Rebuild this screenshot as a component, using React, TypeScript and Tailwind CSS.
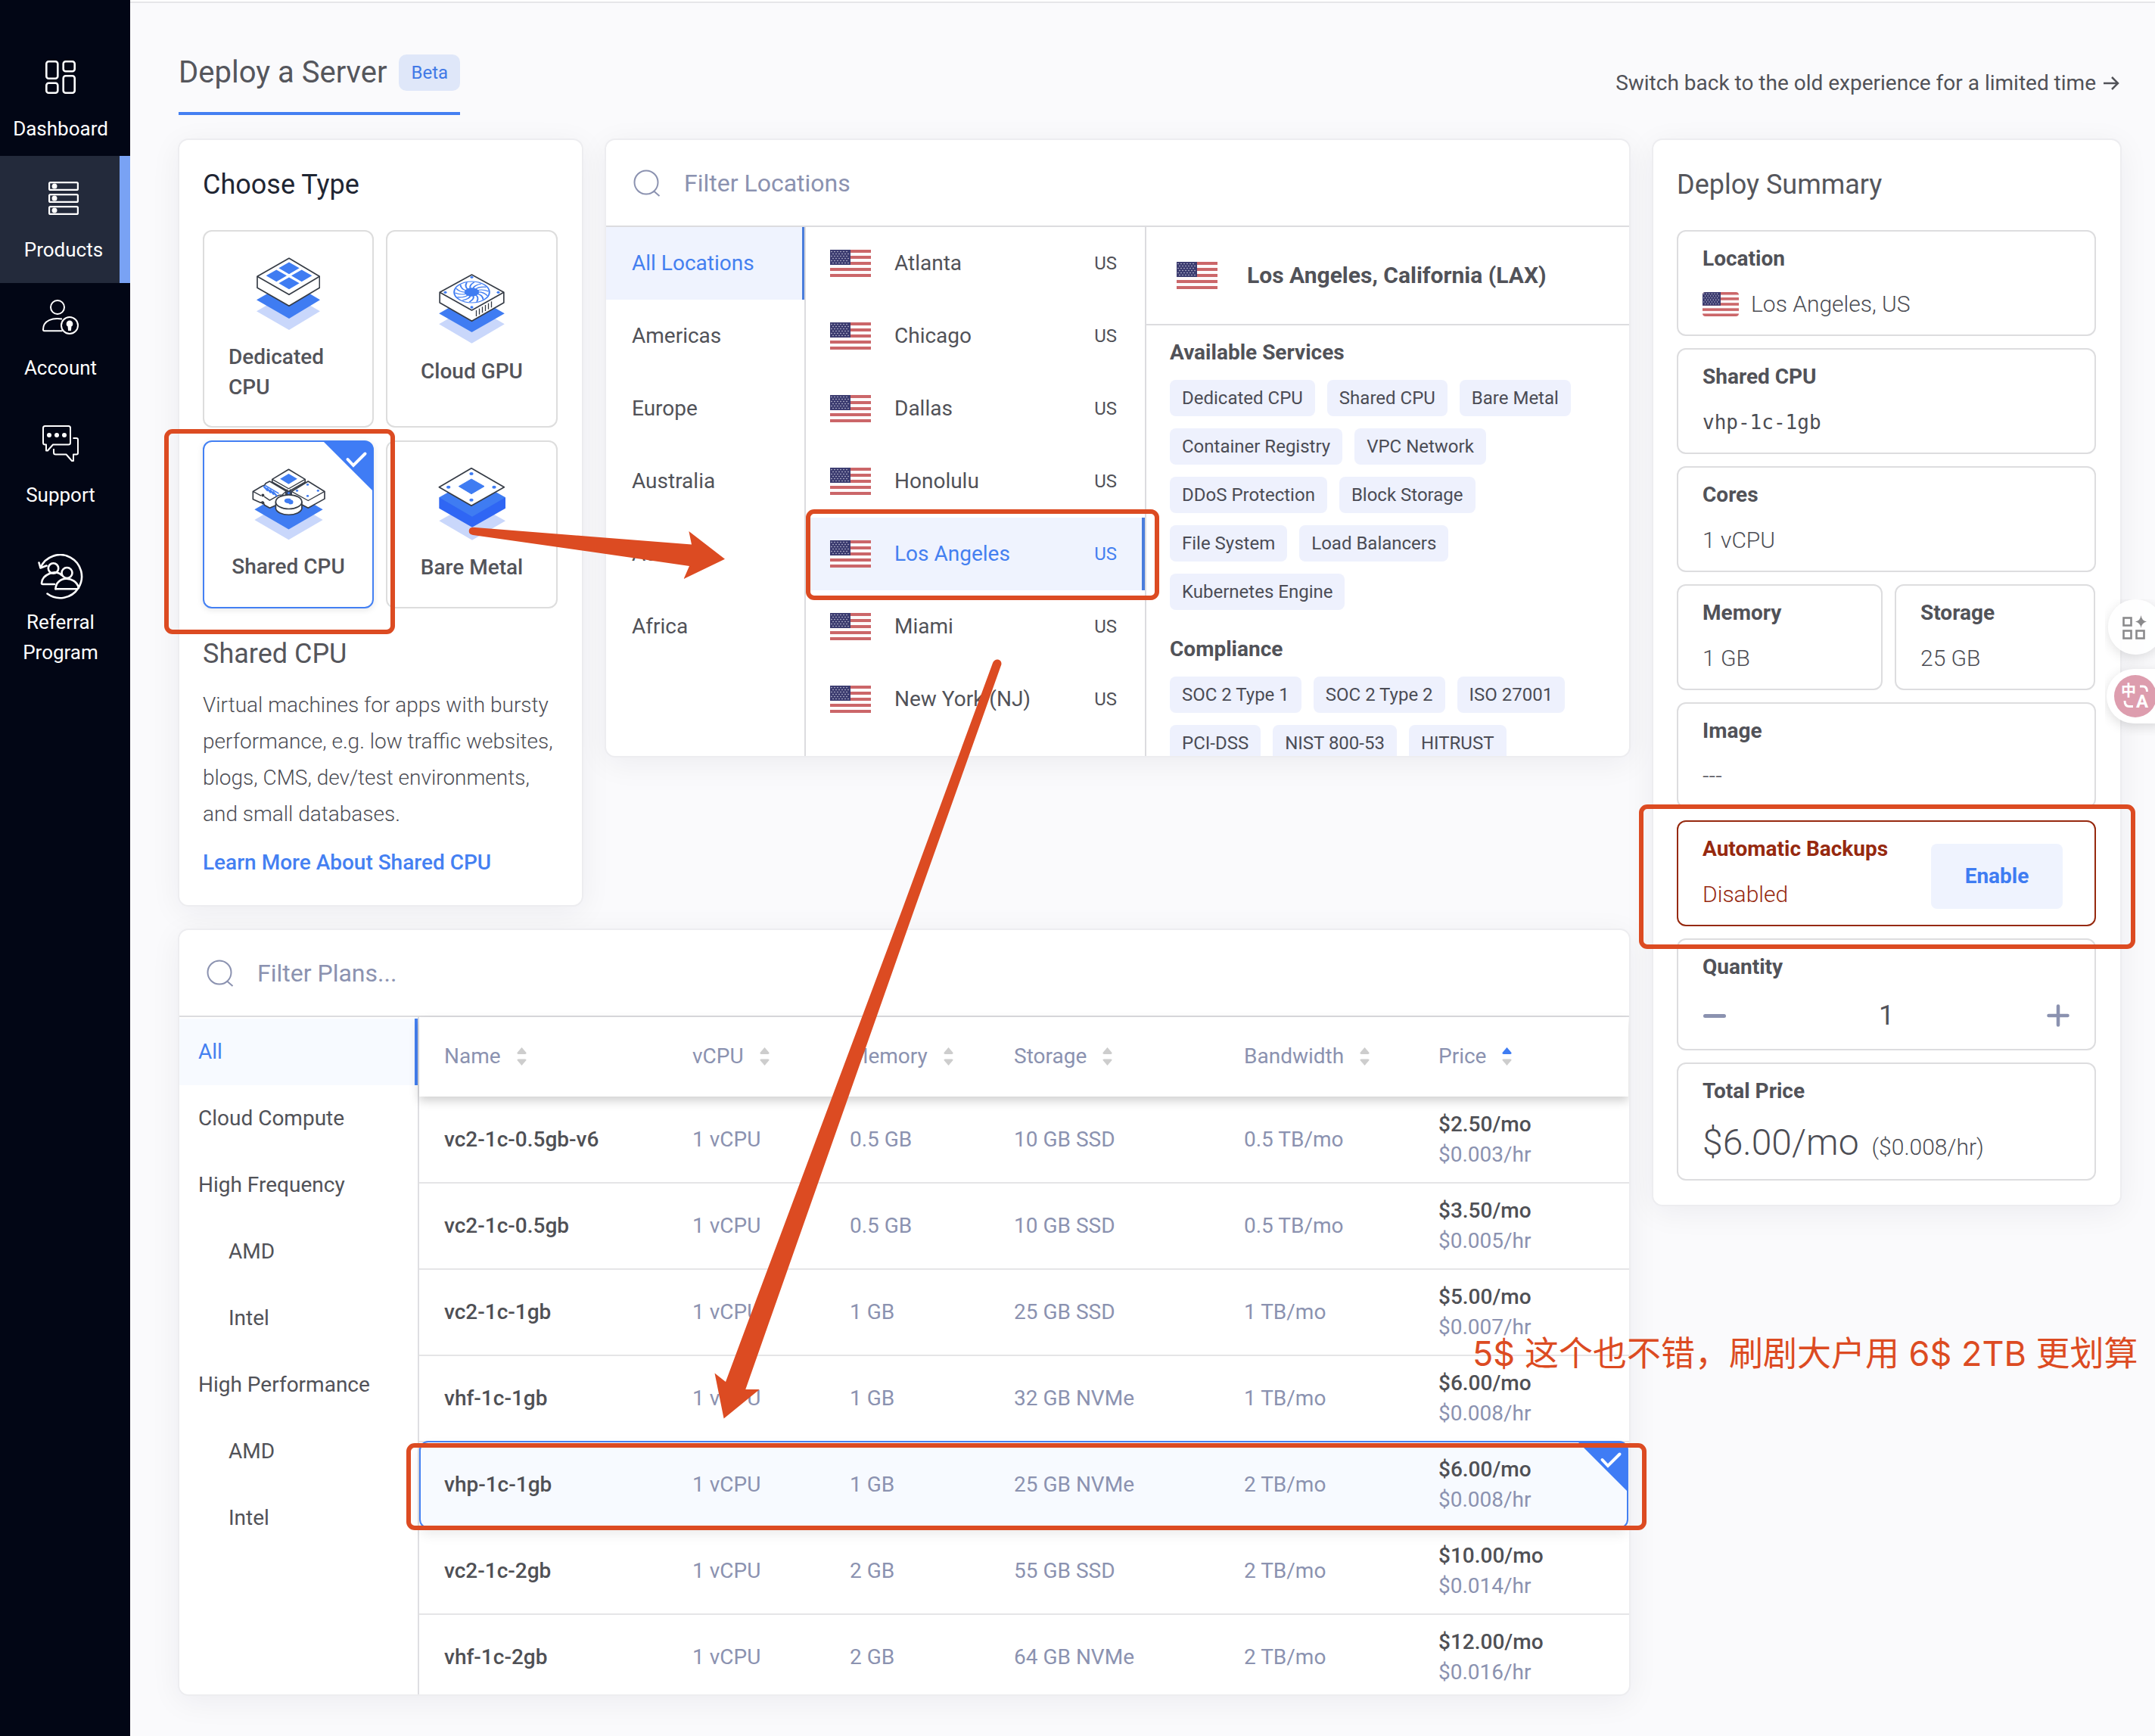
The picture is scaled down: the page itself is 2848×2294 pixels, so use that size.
import type { ReactNode } from 'react';

function Flag({ className }: { className: string }) {
  return (
    <svg className={className} viewBox="0 0 54 36" preserveAspectRatio="none">
      <rect width="54" height="36" fill="#fdf9fa" />
      {[0, 8, 16, 24, 32].map((y) => (
        <rect key={y} y={y} width="54" height="4" fill="#cb6669" />
      ))}
      <rect width="27" height="20" fill="#3b3b6f" />
      {[2, 5, 8, 11, 14, 17].map((y, row) =>
        [2, 6, 10, 14, 18, 22].map((x) => (
          <circle key={`${x}-${y}`} cx={x + (row % 2) * 2} cy={y + 0.5} r="0.75" fill="#d5d5e4" />
        )),
      )}
    </svg>
  );
}

function SearchIcon() {
  return (
    <svg className="h-[36px] w-[36px]" viewBox="0 0 36 36" fill="none" stroke="#8b92b0" strokeWidth="2">
      <circle cx="17" cy="17" r="15.5" />
      <path d="M27 28.5 L34.5 35" />
    </svg>
  );
}

const DARK = '#363c46';
const BLUE = '#3f7cf2';
const PALE = '#c9d7fb';

function DedicatedIcon() {
  return (
    <svg className="h-[96px] w-[84px]" viewBox="57 27 252 288" strokeLinejoin="round">
      <path d="M57 241 183 168 309 241 186 315Z" fill={PALE} />
      <path d="M57 196 186 122 309 196 186 270Z" fill={BLUE} />
      <path d="M60 103 186 31 307 103V148L186 220 60 148Z" fill="#fff" stroke={DARK} strokeWidth="5" />
      <path d="M60 103 186 175 307 103" fill="none" stroke={DARK} strokeWidth="5" />
      {[[186, 70], [136, 100], [236, 100], [186, 130]].map(([x, y]) => (
        <path key={`${x}-${y}`} d={`M${x - 41} ${y}l41-23.500 41 23.500-41 23.500Z`} fill={BLUE} />
      ))}
    </svg>
  );
}

function GpuIcon() {
  const blades = Array.from({ length: 14 }, (_, i) => i * (360 / 14));
  return (
    <svg className="h-[92px] w-[87px]" viewBox="779 94 260 276" strokeLinejoin="round">
      <path d="M779 293 909 218 1039 293 909 369Z" fill={PALE} />
      <path d="M779 251 909 176 1039 251 909 325Z" fill={BLUE} />
      <path d="M782 167 909 97 1036 167V208L909 281 782 208Z" fill="#fff" stroke={DARK} strokeWidth="5" />
      <path d="M782 167 909 238 1036 167" fill="none" stroke={DARK} strokeWidth="5" />
      <g transform="translate(909 166) scale(1 0.6)">
        <circle r="70" fill="none" stroke={BLUE} strokeWidth="6" />
        <circle r="29" fill={BLUE} />
        {blades.map((a) => (
          <path key={a} transform={`rotate(${a})`} d="M24 0Q46 -2 62 24" fill="none" stroke={BLUE} strokeWidth="6" />
        ))}
      </g>
      {[[909, 107], [804, 167], [1014, 167], [909, 226]].map(([x, y]) => (
        <ellipse key={`${x}-${y}`} cx={x} cy={y} rx="6" ry="5" fill={BLUE} />
      ))}
      {[0, 1, 2, 3, 4, 5].map((i) => (
        <path key={i} d={`M${927 + i * 12} ${238 - i * 7}v24`} stroke={DARK} strokeWidth="4" />
      ))}
    </svg>
  );
}

function SharedIcon() {
  return (
    <svg className="h-[95px] w-[97px]" viewBox="38 866 290 284" strokeLinejoin="round">
      <path d="M48 1069 183 990 318 1069 183 1148Z" fill={PALE} />
      <path d="M48 1028 183 950 318 1028 183 1107Z" fill={BLUE} />
      <path d="M118 909 183 870 248 909V920L183 957 118 920Z" fill="#fff" stroke={DARK} strokeWidth="5" />
      <path d="M118 909 183 946 248 909" fill="none" stroke={DARK} strokeWidth="4" />
      <path d="M149 907 183 887 217 907 183 928Z" fill={BLUE} />
      <path d="M42 957 76 937 88 932 92 925 108 917 172 955V972L150 1004 108 1022 88 1011 80 998 72 1001 42 988Z" fill="#fff" stroke={DARK} strokeWidth="5" />
      <path d="M42 957 74 974 M86 977 108 992 144 972 158 970 172 957" fill="none" stroke={DARK} strokeWidth="4" />
      <circle cx="81" cy="972" r="6" fill={DARK} />
      <circle cx="81" cy="1002" r="6" fill={DARK} />
      {[0, 1, 2, 3].map((i) => (
        <path key={i} d={`M${84 + i * 12} ${936 + i * 7}l17 19`} stroke={BLUE} strokeWidth="7" />
      ))}
      <path d="M90 933 144 965" stroke={BLUE} strokeWidth="5" />
      <path d="M194 957 260 917 325 957V986L260 1022 226 1004 194 972Z" fill="#fff" stroke={DARK} strokeWidth="5" />
      <path d="M194 957 260 993 325 957" fill="none" stroke={DARK} strokeWidth="4" />
      {[[258, 930], [216, 954], [299, 954], [258, 975]].map(([x, y]) => (
        <ellipse key={`${x}-${y}`} cx={x} cy={y} rx="5" ry="4" fill={BLUE} />
      ))}
      <path d="M177 948V972M189 948V972" stroke={DARK} strokeWidth="4" />
      <path d="M132 998V1025A52 28 0 0 0 235 1025V998Z" fill="#fff" stroke={DARK} strokeWidth="5" />
      <ellipse cx="183.500" cy="998" rx="51.500" ry="28" fill="#fff" stroke={DARK} strokeWidth="5" />
      <path d="M166 993q2-10 15-8q12-2 11 5q10 1 9 10q0 9-9 7q-5 3-9-3q-18-2-17-11Z" fill={BLUE} />
    </svg>
  );
}

function MetalIcon() {
  return (
    <svg className="h-[96px] w-[90px]" viewBox="779 861 270 288" strokeLinejoin="round">
      <path d="M783 1072 914 998 1046 1072 914 1148Z" fill={PALE} />
      <path d="M783 979H1046V1022L914 1097 783 1022Z" fill="#2f66f4" />
      <path d="M783 979 914 905 1046 979 914 1055Z" fill={BLUE} />
      <path d="M783 938 911 863 1041 938 911 1012Z" fill="#fff" stroke={DARK} strokeWidth="5" />
      <path d="M861 935 911 906 962 935 911 965Z" fill={BLUE} stroke={BLUE} strokeWidth="3" />
      {[[911, 885], [820, 938], [1001, 938], [911, 989]].map(([x, y]) => (
        <ellipse key={`${x}-${y}`} cx={x} cy={y} rx="8" ry="6" fill={BLUE} />
      ))}
    </svg>
  );
}

function Corner() {
  return (
    <svg className="absolute -right-px -top-px h-[66px] w-[66px]" viewBox="0 0 66 66">
      <path d="M0 0H54Q66 0 66 12V66Z" fill="#3f7cf5" />
      <path d="M32.500 24 40 32 55.500 16.500" fill="none" stroke="#fff" strokeWidth="4" strokeLinecap="round" />
    </svg>
  );
}

function Sidebar() {
  const label = 'text-center text-[26px] leading-[40px] text-white';
  return (
    <aside className="flex h-full w-[172px] shrink-0 flex-col bg-[#020615]">
      <div className="flex h-[206px] flex-col items-center pr-3 pt-[80px]">
        <svg className="h-[44px] w-[40px] shrink-0" viewBox="0 0 40 44" fill="none" stroke="#fff" strokeWidth="2.600">
          <rect x="1.300" y="1.300" width="15" height="22.500" rx="3" />
          <rect x="23.700" y="1.300" width="15" height="13" rx="3" />
          <rect x="1.300" y="29.700" width="15" height="13" rx="3" />
          <rect x="23.700" y="20.200" width="15" height="22.500" rx="3" />
        </svg>
        <span className={`mt-[26px] ${label}`}>Dashboard</span>
      </div>
      <div className="flex h-[168px] flex-col items-center border-r-[14px] border-[#79a2f4] bg-[#232a3b] pl-[10px] pt-[34px]">
        <svg className="h-[44px] w-[40px] shrink-0" viewBox="0 0 40 44" fill="none" stroke="#fff" strokeWidth="2.200">
          {[1.1, 17.1, 33.1].map((y) => (
            <g key={y}>
              <rect x="1.100" y={y} width="37.800" height="9.800" rx="1.500" />
              <circle cx="8" cy={y + 4.9} r="2.400" fill="#fff" stroke="#fff" />
            </g>
          ))}
        </svg>
        <span className={`mt-[26px] ${label}`}>Products</span>
      </div>
      <div className="flex flex-col items-center pr-3 pt-[22px]">
        <svg className="h-[46px] w-[48px] shrink-0" viewBox="0 0 48 46" fill="none" stroke="#fff" strokeWidth="2">
          <circle cx="20" cy="10" r="9" />
          <path d="M26 25.500C14 23.500 1 27 1 39.500Q1 41.200 2.500 41.200H26.500" />
          <circle cx="36" cy="34" r="11" />
          <path d="M36 28.500a3.400 3.400 0 0 1 1.500 6.400L37 40h-2l-.5-5.100A3.400 3.400 0 0 1 36 28.500Z" fill="#fff" />
        </svg>
        <span className={`mt-[24px] ${label}`}>Account</span>
      </div>
      <div className="flex flex-col items-center pr-3 pt-[56px]">
        <svg className="h-[48px] w-[48px] shrink-0" viewBox="0 0 48 48" fill="none" stroke="#fff" strokeWidth="2" strokeLinejoin="round">
          <path d="M3.500 1H34.500Q37 1 37 3.500V23Q37 25.500 34.500 25.500H14L7 33.500H5V25.500H3.500Q1 25.500 1 23V3.500Q1 1 3.500 1Z" />
          <path d="M40.500 17H45Q47 17 47 19V36.500Q47 38.500 45 38.500H41V47H39L31.500 38.500H17.500Q15 38.500 15 36V31" />
          <g fill="#fff" stroke="none">
            <circle cx="9" cy="13" r="3" />
            <circle cx="19" cy="13" r="3" />
            <circle cx="29" cy="13" r="3" />
          </g>
        </svg>
        <span className={`mt-[24px] ${label}`}>Support</span>
      </div>
      <div className="flex flex-col items-center pr-3 pt-[58px]">
        <svg className="h-[60px] w-[60px] shrink-0" viewBox="0 0 60 60" fill="none" stroke="#fff" strokeWidth="2.600" strokeLinejoin="round" strokeLinecap="round">
          <path d="M3.500 18A28.500 28.500 0 1 1 12.500 52.500" />
          <path d="M1.500 11.500 3.500 18.500 11.500 15.500" />
          <circle cx="20.500" cy="19" r="6.700" />
          <path d="M22 40H6.500Q5 40 5 38.500C6 27 23 20 31.500 28" />
          <circle cx="38.500" cy="25" r="7" />
          <path d="M23.500 46.300C23.500 29 50 28 54 45" />
          <path d="M23.500 46.300H52" />
        </svg>
        <span className={`mt-[10px] ${label}`}>Referral<br />Program</span>
      </div>
    </aside>
  );
}

const CARD =
  'rounded-[14px] border-2 border-[#ededf0] bg-white shadow-[0_8px_40px_rgba(20,20,50,0.06)]';

function TypeBox({ icon, label, pad, gap, selected, left }: { icon: ReactNode; label: string; pad: string; gap: string; selected?: boolean; left?: boolean }) {
  return (
    <div
      className={`relative flex flex-col items-center rounded-[12px] border-2 ${pad} ${
        selected ? 'border-[#4380f3] shadow-[0_2px_8px_rgba(0,0,0,0.1)]' : 'border-[#dddddd]'
      }`}
    >
      {icon}
      <span className={`${gap} text-[28px] font-medium leading-[40px] text-[#53545a] ${left ? 'self-stretch px-[32px]' : ''}`}>{label}</span>
      {selected && <Corner />}
    </div>
  );
}

function ChooseType() {
  return (
    <section className={`flex h-[1015px] w-[536px] flex-col px-[31px] ${CARD}`}>
      <h2 className="mt-[37px] text-[36px] leading-[44px] text-[#1f2633]">Choose Type</h2>
      <div className="mt-[38px] grid grid-cols-[226px_227px] grid-rows-[261px_222px] gap-x-[16px] gap-y-[17px]">
        <TypeBox icon={<DedicatedIcon />} label="Dedicated CPU" pad="pt-[34px]" gap="mt-[16px]" left />
        <TypeBox icon={<GpuIcon />} label="Cloud GPU" pad="pt-[56px]" gap="mt-[17px]" />
        <TypeBox icon={<SharedIcon />} label="Shared CPU" pad="pt-[35px]" gap="mt-[15px]" selected />
        <TypeBox icon={<MetalIcon />} label="Bare Metal" pad="pt-[34px]" gap="mt-[16px]" />
      </div>
      <h3 className="mt-[38px] text-[36px] leading-[44px] text-[#55565c]">Shared CPU</h3>
      <p className="mt-[22px] whitespace-nowrap text-[28px] font-light leading-[48px] text-[#4c4d54]">
        Virtual machines for apps with bursty<br />
        performance, e.g. low traffic websites,<br />
        blogs, CMS, dev/test environments,<br />
        and small databases.
      </p>
      <a className="mt-[20px] text-[28px] font-medium leading-[40px] text-[#4480f2]">Learn More About Shared CPU</a>
    </section>
  );
}

const regions = ['All Locations', 'Americas', 'Europe', 'Australia', 'Asia', 'Africa'];
const cities = ['Atlanta', 'Chicago', 'Dallas', 'Honolulu', 'Los Angeles', 'Miami', 'New York (NJ)'];
const services = [
  ['Dedicated CPU', 'Shared CPU', 'Bare Metal'],
  ['Container Registry', 'VPC Network'],
  ['DDoS Protection', 'Block Storage'],
  ['File System', 'Load Balancers'],
  ['Kubernetes Engine'],
];
const compliance = [
  ['SOC 2 Type 1', 'SOC 2 Type 2', 'ISO 27001'],
  ['PCI-DSS', 'NIST 800-53', 'HITRUST'],
];

function Chips({ rows }: { rows: string[][] }) {
  return (
    <div className="flex flex-col gap-4">
      {rows.map((row) => (
        <div key={row[0]} className="flex gap-4">
          {row.map((c) => (
            <span key={c} className="h-[48px] rounded-[8px] bg-[#eef1fd] px-4 text-[24px] leading-[48px] text-[#4b4c55]">{c}</span>
          ))}
        </div>
      ))}
    </div>
  );
}

function Locations() {
  return (
    <section className={`flex h-[818px] w-[1356px] flex-col overflow-hidden ${CARD}`}>
      <div className="flex h-[115px] shrink-0 items-center border-b-2 border-[#dcdcdf] pl-[36px]">
        <SearchIcon />
        <span className="ml-[31px] text-[32px] leading-[40px] text-[#8b92b0]">Filter Locations</span>
      </div>
      <div className="flex min-h-0 flex-1">
        <ul className="w-[264px] shrink-0 border-r-2 border-[#dcdcdf]">
          {regions.map((r, i) => (
            <li
              key={r}
              className={`h-[96px] pl-[34px] text-[28px] leading-[96px] ${
                i === 0 ? 'border-r-[3px] border-[#4a7ddc] bg-[#eff3fe] text-[#4480f0]' : 'text-[#515258]'
              }`}
            >
              {r}
            </li>
          ))}
        </ul>
        <ul className="w-[450px] shrink-0 border-r-2 border-[#dcdcdf]">
          {cities.map((c, i) => (
            <li
              key={c}
              className={`flex h-[96px] items-center pl-[32px] text-[28px] ${
                i === 4 ? 'border-r-4 border-[#4a7ddc] bg-[#eff3fe] pr-[33px] text-[#4480f0]' : 'pr-[37px] text-[#515258]'
              }`}
            >
              <Flag className="h-[36px] w-[54px]" />
              <span className="ml-[31px] flex-1">{c}</span>
              <span className="text-[24px]">US</span>
            </li>
          ))}
        </ul>
        <div className="flex flex-1 flex-col">
          <div className="flex h-[130px] shrink-0 items-center border-b-2 border-[#dcdcdf] pl-[40px]">
            <Flag className="h-[36px] w-[54px]" />
            <span className="ml-[39px] mt-[-2px] text-[30px] font-bold text-[#515258]">Los Angeles, California (LAX)</span>
          </div>
          <div className="pl-[31px]">
            <h4 className="mb-[16px] mt-[16px] text-[28px] font-bold leading-[40px] text-[#515258]">Available Services</h4>
            <Chips rows={services} />
            <h4 className="mb-[16px] mt-[32px] text-[28px] font-bold leading-[40px] text-[#515258]">Compliance</h4>
            <Chips rows={compliance} />
          </div>
        </div>
      </div>
    </section>
  );
}

const families: [string, boolean][] = [
  ['All', false],
  ['Cloud Compute', false],
  ['High Frequency', false],
  ['AMD', true],
  ['Intel', true],
  ['High Performance', false],
  ['AMD', true],
  ['Intel', true],
];

const plans = [
  ['vc2-1c-0.5gb-v6', '1 vCPU', '0.5 GB', '10 GB SSD', '0.5 TB/mo', '$2.50/mo', '$0.003/hr'],
  ['vc2-1c-0.5gb', '1 vCPU', '0.5 GB', '10 GB SSD', '0.5 TB/mo', '$3.50/mo', '$0.005/hr'],
  ['vc2-1c-1gb', '1 vCPU', '1 GB', '25 GB SSD', '1 TB/mo', '$5.00/mo', '$0.007/hr'],
  ['vhf-1c-1gb', '1 vCPU', '1 GB', '32 GB NVMe', '1 TB/mo', '$6.00/mo', '$0.008/hr'],
  ['vhp-1c-1gb', '1 vCPU', '1 GB', '25 GB NVMe', '2 TB/mo', '$6.00/mo', '$0.008/hr'],
  ['vc2-1c-2gb', '1 vCPU', '2 GB', '55 GB SSD', '2 TB/mo', '$10.00/mo', '$0.014/hr'],
  ['vhf-1c-2gb', '1 vCPU', '2 GB', '64 GB NVMe', '2 TB/mo', '$12.00/mo', '$0.016/hr'],
];

const COLS = 'grid grid-cols-[328px_208px_217px_304px_257px_1fr] items-center';

function Plans() {
  return (
    <section className={`flex h-[1014px] flex-col overflow-hidden ${CARD}`}>
      <div className="flex h-[115px] shrink-0 items-center border-b-2 border-[#dcdcdf] pl-[36px]">
        <SearchIcon />
        <span className="ml-[31px] text-[32px] leading-[40px] text-[#8b92b0]">Filter Plans...</span>
      </div>
      <div className="flex min-h-0 flex-1">
        <ul className="w-[317px] shrink-0 border-r-2 border-[#dfdfe2] pt-[2px]">
          {families.map(([name, indent], i) => (
            <li
              key={i}
              className={`h-[88px] text-[28px] leading-[88px] ${indent ? 'pl-[65px]' : 'pl-[25px]'} ${
                i === 0 ? 'border-r-4 border-[#4480f2] bg-[#f7faff] text-[#4480f0]' : 'text-[#515258]'
              }`}
            >
              {name}
            </li>
          ))}
        </ul>
        <div className="flex flex-1 flex-col">
          <div className={`z-10 mb-px mr-px h-[105px] shrink-0 bg-white pb-[2px] pl-[33px] text-[28px] text-[#8b92b0] shadow-[0_6px_12px_rgba(0,0,0,0.18)] ${COLS}`}>
            {['Name', 'vCPU', 'Memory', 'Storage', 'Bandwidth', 'Price'].map((h) => (
              <span key={h} className="flex items-center gap-[21px]">
                {h}
                <svg className="h-[24px] w-[13px]" viewBox="0 0 13 24">
                  <path d="M6.500 0 12.500 7Q13 9 11 9H2Q0 9 .5 7Z" fill={h === 'Price' ? '#3f7cf2' : '#cdcdcd'} />
                  <path d="M6.500 24 12.500 17Q13 15.500 11 15.500H2Q0 15.500 .5 17Z" fill="#cdcdcd" />
                </svg>
              </span>
            ))}
          </div>
          {plans.map((p, i) => (
            <div
              key={p[0]}
              className={`relative shrink-0 text-[28px] text-[#8b92b0] ${COLS} ${
                i === 4
                  ? '-mt-[2px] mr-px h-[116px] rounded-[12px] border-2 border-[#4480f2] bg-[#f7faff] pl-[31px] shadow-[0_8px_16px_rgba(0,0,0,0.08)]'
                  : i === 6
                    ? 'h-[112px] pl-[33px]'
                    : 'h-[114px] border-b-2 border-[#e5e5e7] pl-[33px]'
              }`}
            >
              <span className="font-medium text-[#4f5055]">{p[0]}</span>
              <span>{p[1]}</span>
              <span>{p[2]}</span>
              <span>{p[3]}</span>
              <span>{p[4]}</span>
              <span className="flex flex-col leading-[40px]">
                <span className="font-medium text-[#4f5055]">{p[5]}</span>
                <span>{p[6]}</span>
              </span>
              {i === 4 && <Corner />}
            </div>
          ))}
        </div>
      </div>
    </section>
  );
}

function Field({ label, children, className = 'h-[140px]' }: { label: string; children: ReactNode; className?: string }) {
  return (
    <div className={`rounded-[12px] border-2 border-[#dddddf] pl-[32px] pt-[16px] ${className}`}>
      <div className="text-[28px] font-bold leading-[40px] text-[#515258]">{label}</div>
      {children}
    </div>
  );
}

const VALUE = 'mt-[20px] text-[30px] font-light leading-[40px] text-[#4c4d54]';

function Summary() {
  return (
    <section className={`flex h-[1411px] w-[621px] shrink-0 flex-col pl-[31px] pr-[32px] ${CARD}`}>
      <h2 className="mt-[37px] text-[36px] leading-[44px] text-[#55565c]">Deploy Summary</h2>
      <div className="mt-[38px] flex flex-col gap-4">
        <Field label="Location">
          <div className={`flex items-center gap-[16px] ${VALUE}`}>
            <Flag className="h-[32px] w-[48px] rounded-[4px]" />
            Los Angeles, US
          </div>
        </Field>
        <Field label="Shared CPU">
          <div className={`mt-[20px] font-["DejaVu_Sans_Mono",monospace] text-[26px] leading-[40px] text-[#4c4d54]`}>vhp-1c-1gb</div>
        </Field>
        <Field label="Cores"><div className={VALUE}>1 vCPU</div></Field>
        <div className="grid grid-cols-[272px_265px] gap-4">
          <Field label="Memory"><div className={VALUE}>1 GB</div></Field>
          <Field label="Storage"><div className={VALUE}>25 GB</div></Field>
        </div>
        <Field label="Image"><div className={VALUE}>---</div></Field>
        <div className="flex h-[140px] items-center justify-between rounded-[12px] border-2 border-[#96290f] pl-[32px] pr-[42px] text-[#96290f]">
          <div className="h-full pt-[16px]">
            <div className="text-[28px] font-bold leading-[40px]">Automatic Backups</div>
            <div className="mt-[20px] text-[30px] font-light leading-[40px]">Disabled</div>
          </div>
          <button className="mb-[-7px] h-[86px] w-[174px] rounded-[8px] bg-[#eff3fe] text-[28px] font-bold text-[#3f7cf2]">Enable</button>
        </div>
        <Field label="Quantity" className="h-[148px]">
          <div className="mt-[22px] flex h-[44px] items-center justify-between pl-px pr-[33px]">
            <span className="h-[5px] w-[30px] rounded-full bg-[#8b92b0]" />
            <span className="text-[36px] text-[#515258]">1</span>
            <svg className="h-[30px] w-[30px]" viewBox="0 0 30 30" stroke="#8b92b0" strokeWidth="4.500" strokeLinecap="round">
              <path d="M2.500 15H27.500M15 2.500V27.500" />
            </svg>
          </div>
        </Field>
        <Field label="Total Price" className="h-[156px]">
          <div className="mt-[18px] flex items-baseline gap-[17px] font-light leading-[60px] text-[#4c4d54]">
            <span className="text-[48px]">$6.00/mo</span>
            <span className="text-[30px]">($0.008/hr)</span>
          </div>
        </Field>
      </div>
    </section>
  );
}

/* Hand-drawn markup that sits on top of the page. */
function Markup() {
  const box = 'absolute rounded-[11px] border-[6px] border-[#dc4b22]';
  return (
    <div className="pointer-events-none absolute inset-0 z-20">
      <div className={`${box} left-[217px] top-[567px] h-[271px] w-[305px]`} />
      <div className={`${box} left-[1065px] top-[673px] h-[120px] w-[467px]`} />
      <div className={`${box} left-[2166px] top-[1063px] h-[191px] w-[656px]`} />
      <div className={`${box} left-[537px] top-[1907px] h-[115px] w-[1639px]`} />
      <svg className="absolute inset-0 h-full w-full" viewBox="0 0 2848 2294" fill="#dc4b22">
        <path d="M625 696.700L780 709 914 719.500 910.400 702 958 738.700 903.600 765 911 748 780 729 625 707Q619.500 706 619.700 701.500Q620 697 625 696.700Z" />
        <path d="M1312 876Q1314 871 1319 871.500Q1324 873 1323.400 878L1209 1200 1019 1740 985.300 1836H1003.800L956.600 1874.600 944.500 1814.600 959 1826 991 1740 1193 1200Z" />
      </svg>
      <p className="absolute left-[1946px] top-[1759px] whitespace-nowrap font-[Inter,'Noto_Sans_CJK_SC',sans-serif] text-[45px] leading-[60px] text-[#dc4b22]">
        5$ 这个也不错，刷剧大户用 6$ 2TB 更划算
      </p>
    </div>
  );
}

function FloatingTools() {
  return (
    <div className="absolute right-0 top-[792px] z-30 h-[180px] w-[66px] overflow-hidden">
      <div className="relative h-[164px] w-full">
        <div className="absolute left-[4px] top-0 flex h-[73px] w-[73px] items-center rounded-full bg-white/90 pl-[18px] shadow-[0_4px_16px_rgba(0,0,0,0.12)]">
          <svg className="h-[34px] w-[34px]" viewBox="0 0 34 34" fill="none" stroke="#8a8a8c" strokeWidth="2.600">
            <rect x="2.500" y="4.500" width="10" height="10" />
            <rect x="2.500" y="21.500" width="10" height="10" />
            <rect x="19.500" y="21.500" width="10" height="10" />
            <path d="M25.500 1Q26.500 8.500 33 9.500 26.500 10.500 25.500 18 24.500 10.500 18 9.500 24.500 8.500 25.500 1Z" fill="#8a8a8c" stroke="none" />
          </svg>
        </div>
        <div className="absolute left-[2px] top-[92px] h-[72px] w-[72px] rounded-l-full bg-white shadow-[0_4px_16px_rgba(0,0,0,0.14)]">
          <div className="absolute left-[10px] top-[8px] h-[56px] w-[56px] rounded-full bg-[#dd9dae] font-bold text-white">
            <span className="absolute left-[9px] top-[10px] font-['Noto_Sans_CJK_SC',sans-serif] text-[20px] leading-[20px]">中</span>
            <span className="absolute left-[29px] top-[23px] text-[24px] leading-[24px]">A</span>
            <svg className="absolute inset-0 h-full w-full" viewBox="0 0 56 56" fill="none" stroke="#fff" strokeWidth="3">
              <path d="M34 15H38Q43.500 15 43.500 22" />
              <path d="M14 34Q14 41.500 20 41.500H25" />
            </svg>
          </div>
        </div>
      </div>
    </div>
  );
}

export default function App() {
  return (
    <div className="relative flex h-[2294px] w-[2848px] overflow-hidden bg-[#fafafc] font-[Roboto,sans-serif]">
      <Sidebar />
      <main className="flex flex-1 flex-col border-t-2 border-white pl-[63px] pr-[45px]">
        <div className="-ml-[63px] -mr-[45px] h-[2px] shrink-0 bg-[#e6e6e9]" />
        <header className="flex h-[179px] shrink-0 items-start justify-between">
          <div className="ml-px mt-[68px] flex h-[80px] items-start justify-between gap-[16px] border-b-4 border-[#4480f2]">
            <h1 className="text-[40px] leading-[48px] text-[#55565c]">Deploy a Server</h1>
            <span className="h-[48px] rounded-[10px] bg-[#dfe7f9] px-4 text-[24px] leading-[49px] text-[#4179e6]">Beta</span>
          </div>
          <a className="mr-[3px] mt-[86px] flex items-center gap-[9px] text-[28px] leading-[40px] text-[#515258]">
            Switch back to the old experience for a limited time
            <svg className="h-[20px] w-[22px]" viewBox="0 0 22 20" fill="none" stroke="#515258" strokeWidth="2.500">
              <path d="M1 10H20M12 2 20 10 12 18" />
            </svg>
          </a>
        </header>
        <div className="flex items-start gap-[28px]">
          <div className="flex w-[1920px] flex-col gap-[29px]">
            <div className="flex items-start gap-[28px]">
              <ChooseType />
              <Locations />
            </div>
            <Plans />
          </div>
          <Summary />
        </div>
      </main>
      <Markup />
      <FloatingTools />
    </div>
  );
}
